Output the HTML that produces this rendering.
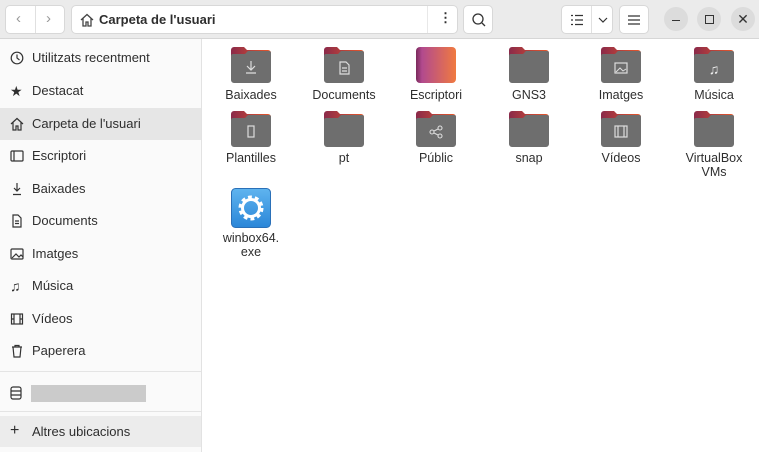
<!DOCTYPE html>
<html><head><meta charset="utf-8"><style>
*{margin:0;padding:0;box-sizing:border-box}
body{width:759px;height:452px;overflow:hidden;background:#fff;font-family:"Liberation Sans",sans-serif;font-size:13px;color:#2e2e2e;position:relative}
.a{position:absolute}
.hdr{left:0;top:0;width:759px;height:39px;background:#ebebeb;border-bottom:1px solid #d6d6d6}
.btn{position:absolute;background:#fff;border:1px solid #d8d8d8;border-radius:5px}
.side{left:0;top:39px;width:202px;height:413px;background:#fafafa;border-right:1px solid #e2e2e2}
.it{position:absolute;left:0;width:201px;height:32px;line-height:32px;padding-left:32px;font-size:13px}
.ic{position:absolute;left:10px;top:9px;width:14px;height:14px}
.f{position:absolute;width:40px;height:36px}
.lb{position:absolute;width:92px;text-align:center;font-size:12.5px;line-height:14px}
.wc{position:absolute;width:24px;height:24px;border-radius:12px;background:#dcdcdc;text-align:center;line-height:24px;font-size:13px}
</style></head><body>
<div class="a hdr"></div>
<div class="btn" style="left:5px;top:5px;width:60px;height:29px"><div class="a" style="left:29px;top:0;width:1px;height:27px;background:#e0e0e0"></div><span class="a" style="left:10px;top:4px;color:#999;font-size:15px">‹</span><span class="a" style="left:40px;top:4px;color:#999;font-size:15px">›</span></div>
<div class="btn" style="left:71px;top:5px;width:387px;height:29px"><div class="a" style="left:355px;top:0;width:1px;height:27px;background:#e8e8e8"></div>
<svg class="a" style="left:8px;top:7px" width="14" height="14" viewBox="0 0 14 14" fill="none" stroke="#444" stroke-width="1.3"><path d="M1 7L7 1.5L13 7M3 5.5V13H6V9H8V13H11V5.5"/></svg>
<span class="a" style="left:27px;top:6px;font-weight:bold;font-size:13px">Carpeta de l'usuari</span><span class="a" style="left:367px;top:4px;font-weight:bold">⋮</span></div>
<div class="btn" style="left:463px;top:5px;width:30px;height:29px"><svg class="a" style="left:7px;top:6px" width="16" height="16" fill="none" stroke="#333" stroke-width="1.3"><circle cx="7" cy="7" r="5"/><path d="M11 11L14 14"/></svg></div>
<div class="btn" style="left:561px;top:5px;width:52px;height:29px"><div class="a" style="left:29px;top:0;width:1px;height:27px;background:#e0e0e0"></div><svg class="a" style="left:8px;top:8px" width="14" height="12" fill="none" stroke="#333" stroke-width="1.2"><path d="M1 1.5h2M5 1.5h8M1 6h2M5 6h8M1 10.5h2M5 10.5h8"/></svg><svg class="a" style="left:35px;top:11px" width="12" height="8" fill="none" stroke="#333" stroke-width="1.2"><path d="M2 1l4 4 4-4"/></svg></div>
<div class="btn" style="left:619px;top:5px;width:30px;height:29px"><svg class="a" style="left:8px;top:9px" width="12" height="10" fill="none" stroke="#333" stroke-width="1.2"><path d="M0 1h12M0 5h12M0 9h12"/></svg></div>
<div class="wc" style="left:664px;top:7px"><div class="a" style="left:8px;top:13px;width:8px;height:1.3px;background:#333"></div></div>
<div class="wc" style="left:697px;top:7px"><div class="a" style="left:7.5px;top:7.5px;width:9px;height:9px;border:1.2px solid #333"></div></div>
<div class="wc" style="left:731px;top:7px;font-size:14px;color:#333">✕</div>

<div class="a side">
<div class="it" style="top:3px">Utilitzats recentment<svg class="ic" viewBox="0 0 14 14" fill="none" stroke="#333" stroke-width="1.2"><circle cx="7" cy="7" r="5.8"/><path d="M7 3.5V7l2.5 2"/></svg></div>
<div class="it" style="top:36px">Destacat<span class="ic" style="top:0;font-size:14px">★</span></div>
<div class="it" style="top:69px;background:#e6e6e6">Carpeta de l'usuari<svg class="ic" viewBox="0 0 14 14" fill="none" stroke="#333" stroke-width="1.2"><path d="M1 7L7 1.5L13 7M3 5.5V13H6V9H8V13H11V5.5"/></svg></div>
<div class="it" style="top:101px">Escriptori<svg class="ic" viewBox="0 0 14 14" fill="none" stroke="#333" stroke-width="1.2"><rect x="1" y="2" width="12" height="10" rx="1"/><path d="M4 2v10"/></svg></div>
<div class="it" style="top:134px">Baixades<svg class="ic" viewBox="0 0 14 14" fill="none" stroke="#333" stroke-width="1.2"><path d="M7 1v8M4 6l3 3 3-3M3 12.5h8"/></svg></div>
<div class="it" style="top:166px">Documents<svg class="ic" viewBox="0 0 14 14" fill="none" stroke="#333" stroke-width="1.2"><path d="M3 1h5l3 3v9H3z M5 7h4M5 9.5h4"/></svg></div>
<div class="it" style="top:199px">Imatges<svg class="ic" viewBox="0 0 14 14" fill="none" stroke="#333" stroke-width="1.2"><rect x="1" y="2" width="12" height="10" rx="1"/><path d="M2 11l4-4 3 3 2-2 2 2"/></svg></div>
<div class="it" style="top:231px">Música<span class="ic" style="top:0;font-size:14px">♫</span></div>
<div class="it" style="top:264px">Vídeos<svg class="ic" viewBox="0 0 14 14" fill="none" stroke="#333" stroke-width="1.2"><rect x="1.5" y="2" width="11" height="10"/><path d="M4 2v10M10 2v10M1.5 7h2.5M10 7h2.5"/></svg></div>
<div class="it" style="top:296px">Paperera<svg class="ic" viewBox="0 0 14 14" fill="none" stroke="#333" stroke-width="1.2"><path d="M2 3h10M5 3V1.5h4V3M3 3l1 10h6l1-10"/></svg></div>
<div class="a" style="left:0;top:332px;width:201px;height:1px;background:#e4e4e4"></div>
<svg class="a" style="left:10px;top:347px" width="12" height="14" fill="none" stroke="#333" stroke-width="1.2"><rect x="1" y="1" width="10" height="12" rx="2"/><path d="M1 5h10M1 9h10"/></svg>
<div class="a" style="left:31px;top:346px;width:115px;height:17px;background:#cbcbcb"></div>
<div class="a" style="left:0;top:372px;width:201px;height:1px;background:#e4e4e4"></div>
<div class="it" style="top:377px;background:#ececec;height:31px;line-height:31px">Altres ubicacions<span class="ic" style="top:0;font-size:16px;line-height:29px">+</span></div>
</div>

<svg width="0" height="0" style="position:absolute"><defs>
<linearGradient id="tab" x1="0" x2="1"><stop offset="0" stop-color="#8a2a4a"/><stop offset="1" stop-color="#e8582a"/></linearGradient>
<linearGradient id="desk" x1="0" x2="1"><stop offset="0" stop-color="#7a2a5c"/><stop offset="0.15" stop-color="#b24a8e"/><stop offset="1" stop-color="#f07a40"/></linearGradient>
<symbol id="fold" viewBox="0 0 40 36"><path d="M0 3a3 3 0 0 1 3-3h10l3 3h21a3 3 0 0 1 3 3v6H0z" fill="url(#tab)"/><path d="M0 9a2 2 0 0 1 2-2h12l3-3h21a2 2 0 0 1 2 2v27a3 3 0 0 1-3 3H3a3 3 0 0 1-3-3z" fill="#6e6e6e"/></symbol>
</defs></svg>

<!-- row 1 -->
<svg class="f" style="left:231px;top:47px"><use href="#fold"/><path d="M20 14v9M16 19l4 4 4-4M15 26h10" stroke="#ddd" fill="none" stroke-width="1.2"/></svg>
<svg class="f" style="left:324px;top:47px"><use href="#fold"/><path d="M16 15h6l3 3v9h-9z M18 21h5M18 24h5" stroke="#ddd" fill="none" stroke-width="1.2"/></svg>
<svg class="f" style="left:416px;top:47px"><rect width="40" height="36" rx="4" fill="url(#desk)"/></svg>
<svg class="f" style="left:509px;top:47px"><use href="#fold"/></svg>
<svg class="f" style="left:601px;top:47px"><use href="#fold"/><rect x="14" y="16" width="12" height="10" stroke="#ddd" fill="none" stroke-width="1.2"/><path d="M15 25l4-4 3 3 3-2" stroke="#ddd" fill="none"/></svg>
<svg class="f" style="left:694px;top:47px"><use href="#fold"/><text x="20" y="27" text-anchor="middle" fill="#eee" font-size="14">♫</text></svg>
<div class="lb" style="left:205px;top:88px">Baixades</div>
<div class="lb" style="left:298px;top:88px">Documents</div>
<div class="lb" style="left:390px;top:88px">Escriptori</div>
<div class="lb" style="left:483px;top:88px">GNS3</div>
<div class="lb" style="left:575px;top:88px">Imatges</div>
<div class="lb" style="left:668px;top:88px">Música</div>
<!-- row 2 -->
<svg class="f" style="left:231px;top:111px"><use href="#fold"/><rect x="17" y="15" width="6" height="11" stroke="#ddd" fill="none" stroke-width="1.2"/></svg>
<svg class="f" style="left:324px;top:111px"><use href="#fold"/></svg>
<svg class="f" style="left:416px;top:111px"><use href="#fold"/><g stroke="#ddd" fill="none" stroke-width="1.1"><circle cx="16" cy="21" r="2"/><circle cx="24" cy="17" r="2"/><circle cx="24" cy="25" r="2"/><path d="M18 20l4-2M18 22l4 2"/></g></svg>
<svg class="f" style="left:509px;top:111px"><use href="#fold"/></svg>
<svg class="f" style="left:601px;top:111px"><use href="#fold"/><g stroke="#ddd" fill="none" stroke-width="1.2"><rect x="14" y="15" width="12" height="11"/><path d="M17 15v11M23 15v11"/></g></svg>
<svg class="f" style="left:694px;top:111px"><use href="#fold"/></svg>
<div class="lb" style="left:205px;top:151px">Plantilles</div>
<div class="lb" style="left:298px;top:151px">pt</div>
<div class="lb" style="left:390px;top:151px">Públic</div>
<div class="lb" style="left:483px;top:151px">snap</div>
<div class="lb" style="left:575px;top:151px">Vídeos</div>
<div class="lb" style="left:668px;top:151px">VirtualBox<br>VMs</div>
<!-- winbox -->
<svg class="a" style="left:231px;top:188px" width="40" height="40"><defs><linearGradient id="wb" x1="0" y1="0" x2="0" y2="1"><stop offset="0" stop-color="#5fb4ef"/><stop offset="1" stop-color="#2a86d8"/></linearGradient></defs><rect x="0.5" y="0.5" width="39" height="39" rx="4" fill="url(#wb)" stroke="#2a70b8"/><circle cx="20" cy="20" r="10" fill="none" stroke="#fff" stroke-width="5" stroke-dasharray="3.5 2.8"/><circle cx="20" cy="20" r="8.5" fill="none" stroke="#fff" stroke-width="3"/></svg>
<div class="lb" style="left:205px;top:231px">winbox64.<br>exe</div>
</body></html>
